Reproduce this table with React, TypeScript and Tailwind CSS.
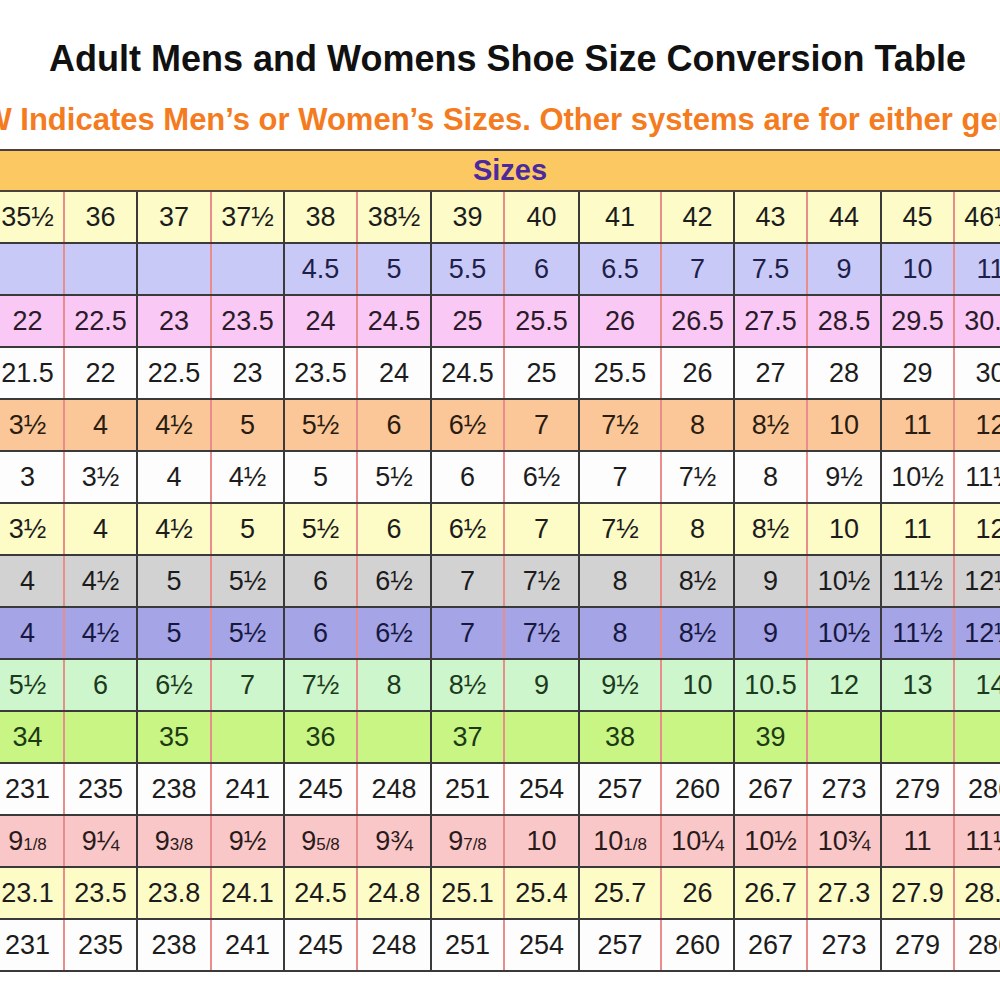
import React from 'react'

type Cell = string | { whole: string; frac: string }

const COL_WIDTHS = ['w-[73px]', 'w-[73px]', 'w-[74px]', 'w-[73px]', 'w-[73px]', 'w-[74px]', 'w-[73px]', 'w-[75px]', 'w-[82px]', 'w-[73px]', 'w-[73px]', 'w-[74px]', 'w-[73px]', 'w-[73px]']

const eighth = (whole: string, frac: string) => ({ whole, frac })

const ROWS: { bg: string; text: string; cells: Cell[] }[] = [
  { bg: 'bg-[#fdfcc9]', text: 'text-[#1c1c1c]', cells: ['35½', '36', '37', '37½', '38', '38½', '39', '40', '41', '42', '43', '44', '45', '46½'] },
  { bg: 'bg-[#c9c9f7]', text: 'text-[#1e1f4a]', cells: ['', '', '', '', '4.5', '5', '5.5', '6', '6.5', '7', '7.5', '9', '10', '11'] },
  { bg: 'bg-[#f9c8f4]', text: 'text-[#2a1a2a]', cells: ['22', '22.5', '23', '23.5', '24', '24.5', '25', '25.5', '26', '26.5', '27.5', '28.5', '29.5', '30.5'] },
  { bg: 'bg-[#fdfdfd]', text: 'text-[#1c1c1c]', cells: ['21.5', '22', '22.5', '23', '23.5', '24', '24.5', '25', '25.5', '26', '27', '28', '29', '30'] },
  { bg: 'bg-[#fbc798]', text: 'text-[#2a1c10]', cells: ['3½', '4', '4½', '5', '5½', '6', '6½', '7', '7½', '8', '8½', '10', '11', '12'] },
  { bg: 'bg-[#fdfdfd]', text: 'text-[#1c1c1c]', cells: ['3', '3½', '4', '4½', '5', '5½', '6', '6½', '7', '7½', '8', '9½', '10½', '11½'] },
  { bg: 'bg-[#fdfbc6]', text: 'text-[#1c1c1c]', cells: ['3½', '4', '4½', '5', '5½', '6', '6½', '7', '7½', '8', '8½', '10', '11', '12'] },
  { bg: 'bg-[#d2d2d2]', text: 'text-[#1c1c1c]', cells: ['4', '4½', '5', '5½', '6', '6½', '7', '7½', '8', '8½', '9', '10½', '11½', '12½'] },
  { bg: 'bg-[#a4a4e6]', text: 'text-[#161840]', cells: ['4', '4½', '5', '5½', '6', '6½', '7', '7½', '8', '8½', '9', '10½', '11½', '12½'] },
  { bg: 'bg-[#cdf6cd]', text: 'text-[#1c3a1c]', cells: ['5½', '6', '6½', '7', '7½', '8', '8½', '9', '9½', '10', '10.5', '12', '13', '14'] },
  { bg: 'bg-[#c9f585]', text: 'text-[#1c3a14]', cells: ['34', '', '35', '', '36', '', '37', '', '38', '', '39', '', '', ''] },
  { bg: 'bg-[#fdfdfd]', text: 'text-[#1c1c1c]', cells: ['231', '235', '238', '241', '245', '248', '251', '254', '257', '260', '267', '273', '279', '286'] },
  {
    bg: 'bg-[#f9c7c7]',
    text: 'text-[#2a1a1a]',
    cells: [eighth('9', '1/8'), '9¼', eighth('9', '3/8'), '9½', eighth('9', '5/8'), '9¾', eighth('9', '7/8'), '10', eighth('10', '1/8'), '10¼', '10½', '10¾', '11', '11¼'],
  },
  { bg: 'bg-[#fdfbc6]', text: 'text-[#1c1c1c]', cells: ['23.1', '23.5', '23.8', '24.1', '24.5', '24.8', '25.1', '25.4', '25.7', '26', '26.7', '27.3', '27.9', '28.5'] },
  { bg: 'bg-[#fdfdfd]', text: 'text-[#1c1c1c]', cells: ['231', '235', '238', '241', '245', '248', '251', '254', '257', '260', '267', '273', '279', '286'] },
]

const renderCell = (cell: Cell) => {
  if (typeof cell === 'string') return cell
  return (
    <span>
      {cell.whole}
      <span className="text-[17px]">{cell.frac}</span>
    </span>
  )
}

export default function App() {
  return (
    <div className="w-[1000px] h-[1000px] overflow-hidden bg-white font-['Liberation_Sans',Arial,sans-serif]">
      {/* headings */}
      <div className="h-[149px] flex flex-col">
        <h1 className="mt-[41px] pl-[15px] text-center text-[36px] leading-[36px] font-bold text-[#111] whitespace-nowrap">
          Adult Mens and Womens Shoe Size Conversion Table
        </h1>
        <p className="mt-[27px] ml-[-52px] text-[31px] leading-[31px] font-bold text-[#f47b20] whitespace-nowrap">
          M/W Indicates Men’s or Women’s Sizes. Other systems are for either gender.
        </p>
      </div>

      {/* table */}
      <div className="ml-[-8px] w-[1036px]">
        <div className="h-[43px] bg-[#fcc862] border-t-2 border-b-2 border-[#4a4040] flex items-center justify-center">
          <span className="text-[29px] font-bold text-[#4b2a9e]">Sizes</span>
        </div>
        {ROWS.map((row, r) => (
          <div key={r} className={`flex h-[52px] border-b-2 border-[#3a3a3a] ${row.bg}`}>
            {row.cells.map((cell, c) => (
              <div
                key={c}
                className={`${COL_WIDTHS[c]} shrink-0 h-full flex items-center justify-center text-[27px] whitespace-nowrap ${row.text} border-r-2 ${c % 2 === 0 ? 'border-[#e88c8c]' : 'border-[#3a3a3a]'}`}
              >
                {renderCell(cell)}
              </div>
            ))}
          </div>
        ))}
      </div>
    </div>
  )
}
